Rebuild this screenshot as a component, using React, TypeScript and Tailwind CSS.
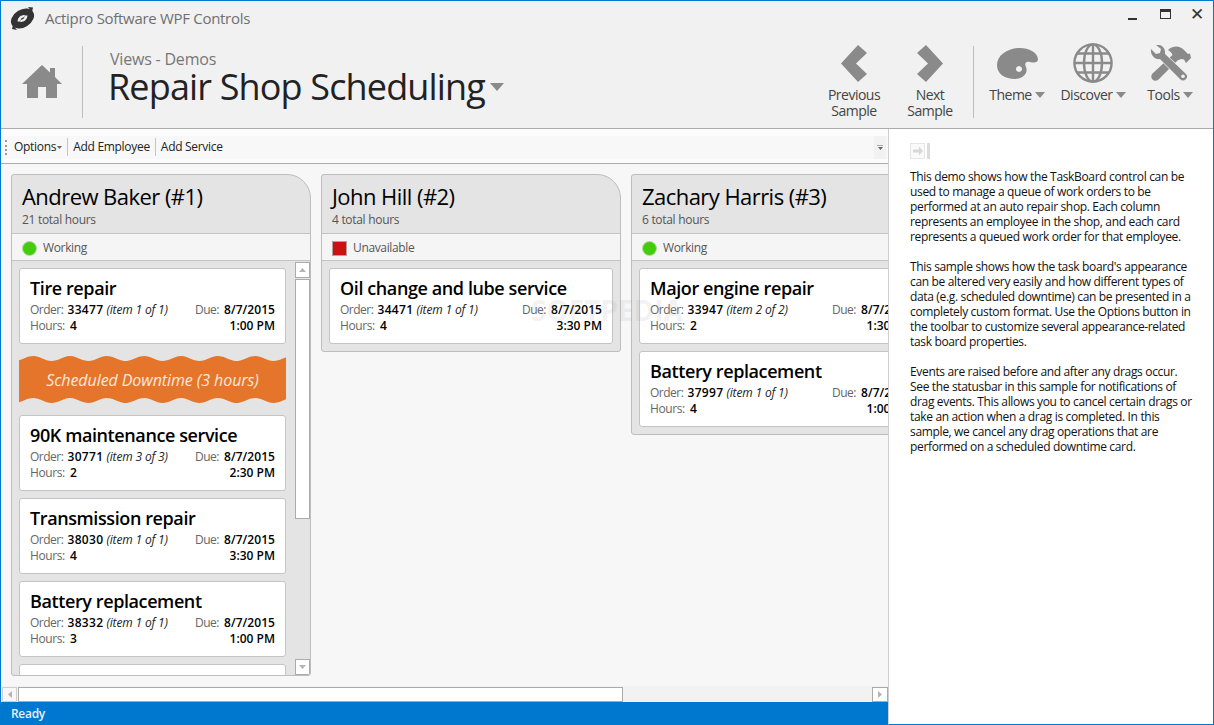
import type { ReactNode } from 'react';

interface Job {
  title: string;
  order: string;
  item: string;
  hours: string;
  time: string;
}

interface Employee {
  name: string;
  total: string;
  status: 'Working' | 'Unavailable';
}

const FONT = '"Open Sans", "Noto Sans", sans-serif';

const andrewJobs: Job[] = [
  { title: 'Tire repair', order: '33477', item: '(item 1 of 1)', hours: '4', time: '1:00 PM' },
];
const andrewJobsAfter: Job[] = [
  { title: '90K maintenance service', order: '30771', item: '(item 3 of 3)', hours: '2', time: '2:30 PM' },
  { title: 'Transmission repair', order: '38030', item: '(item 1 of 1)', hours: '4', time: '3:30 PM' },
  { title: 'Battery replacement', order: '38332', item: '(item 1 of 1)', hours: '3', time: '1:00 PM' },
];
const johnJobs: Job[] = [
  { title: 'Oil change and lube service', order: '34471', item: '(item 1 of 1)', hours: '4', time: '3:30 PM' },
];
const zacharyJobs: Job[] = [
  { title: 'Major engine repair', order: '33947', item: '(item 2 of 2)', hours: '2', time: '1:30 PM' },
  { title: 'Battery replacement', order: '37997', item: '(item 1 of 1)', hours: '4', time: '1:00 PM' },
];

const description = [
  'This demo shows how the TaskBoard control can be\nused to manage a queue of work orders to be\nperformed at an auto repair shop. Each column\nrepresents an employee in the shop, and each card\nrepresents a queued work order for that employee.',
  "This sample shows how the task board's appearance\ncan be altered very easily and how different types of\ndata (e.g. scheduled downtime) can be presented in a\ncompletely custom format. Use the Options button in\nthe toolbar to customize several appearance-related\ntask board properties.",
  'Events are raised before and after any drags occur.\nSee the statusbar in this sample for notifications of\ndrag events. This allows you to cancel certain drags or\ntake an action when a drag is completed. In this\nsample, we cancel any drag operations that are\nperformed on a scheduled downtime card.',
];

function wavePath(width: number, height: number) {
  const edge = (x: number) => 2.5 - 2.5 * Math.cos((2 * Math.PI * (x - 14)) / 37);
  const top: string[] = [];
  const bottom: string[] = [];
  for (let x = 0; x <= width; x += 3) {
    top.push(`${x} ${edge(x).toFixed(2)}`);
    bottom.unshift(`${x} ${(height - 5 + edge(x)).toFixed(2)}`);
  }
  return `M${top.join(' L')} L${bottom.join(' L')}z`;
}

function Caret({ small }: { small?: boolean }) {
  return (
    <svg width={small ? 5 : 10} height={small ? 3 : 6} viewBox="0 0 10 6" className="shrink-0">
      <path d="M0 0h10L5 6z" fill={small ? '#666' : '#8a8a8a'} />
    </svg>
  );
}

function Logo() {
  return (
    <svg width="25" height="23" viewBox="0 0 25 23">
      <ellipse cx="12.5" cy="11.5" rx="12.5" ry="8.8" fill="#333" transform="rotate(-32 12.5 11.5)" />
      <path d="M18 0 L23 0.5 L22 5 z" fill="#333" />
      <path d="M7 23 L2 22 L3 18 z" fill="#333" />
      <path d="M7.5 14.5 C8 10 11 8 15 8 L13.5 10.5 C11.5 10.5 10.5 12 10.5 14.5z" fill="#f1f1f1" />
      <path d="M17.5 8.5 C17 13 14 15 10 15 L11.5 12.5 C13.5 12.5 14.5 11 14.5 8.5z" fill="#f1f1f1" />
    </svg>
  );
}

function HomeIcon() {
  return (
    <svg width="40" height="34" viewBox="0 0 40 34">
      <path d="M20 0 L28 7.5 V3 H33 V12 L40 19 H35 V33 H24 V22 H16 V33 H5 V19 H0z" fill="#8a8a8a" />
    </svg>
  );
}

function ChevronIcon({ dir }: { dir: 'left' | 'right' }) {
  return (
    <svg width="26" height="37" viewBox="0 0 26 37">
      <path
        d={dir === 'left' ? 'M17 0 L26 8 L15 18.5 L26 29 L17 37 L0 18.5z' : 'M9 0 L0 8 L11 18.5 L0 29 L9 37 L26 18.5z'}
        fill="#8a8a8a"
      />
    </svg>
  );
}

function PaletteIcon() {
  return (
    <svg width="41" height="31" viewBox="0 0 41 31">
      <path
        fillRule="evenodd"
        d="M23 0 C32 0 40 4 41 11 C41 15 37 15 33 14 C29 13 27 15 29 19 C31 24 28 30 18 31 C8 31 0 26 0 17 C0 7 11 0 23 0z M22 18 a3 3 0 1 0 0.01 0z"
        fill="#8a8a8a"
      />
    </svg>
  );
}

function GlobeIcon() {
  return (
    <svg width="40" height="40" viewBox="0 0 40 40" fill="none" stroke="#8a8a8a" strokeWidth="2.4">
      <circle cx="20" cy="20" r="18.6" />
      <ellipse cx="20" cy="20" rx="9" ry="18.6" />
      <path d="M20 1.5V38.5M1.5 20H38.5M4.5 10.5H35.5M4.5 29.5H35.5" />
    </svg>
  );
}

function ToolsIcon() {
  return (
    <svg width="41" height="36" viewBox="0 0 41 36">
      <path
        fill="#8a8a8a"
        d="M18 5 C24 0 30 1 34 5 L38 9 L40 8.5 L41 13 L36 18 L34 14.5 L31 14 L27.5 15.5 L8 35 C6 36 4 36 2.5 34.5 C1 33 1 31 2 29 L22.5 10 C22 8 20 6 18 5z"
      />
      <path
        fill="#8a8a8a"
        stroke="#f1f1f1"
        strokeWidth="1.2"
        paintOrder="stroke"
        d="M1 4 L6 9 L10 8 L11 4 L6 0 C10 -1 15 2 15 7 L15 9 L36 29 C38 31 37 33 36 34 C34 36 32 36 30 34 L10 14 C5 15 0 10 1 4z"
      />
      <circle cx="33" cy="31.2" r="1.8" fill="#f1f1f1" />
    </svg>
  );
}

function CommandButton({ icon, label, w, caret }: { icon: ReactNode; label: string[]; w: string; caret?: boolean }) {
  return (
    <div className={`flex flex-col items-center -mt-[5px] ${w}`}>
      <div className="h-[44px] flex items-center justify-center">{icon}</div>
      <div className="mt-[2px] text-[14px] leading-[16px] text-[#444] text-center tracking-[-0.5px] flex flex-col items-center">
        {label.map((line) => (
          <span key={line} className="flex items-center gap-[3px] whitespace-nowrap">
            {line}
            {caret && <Caret />}
          </span>
        ))}
      </div>
    </div>
  );
}

function JobCard({ job, wide }: { job: Job; wide?: boolean }) {
  return (
    <div
      className={`shrink-0 h-[76px] bg-white border border-[#c4c4c4] rounded-[3px] pl-[10px] pr-[10px] pt-[7px] ${wide ? 'w-[284px]' : 'w-[267px]'}`}
    >
      <div className="text-[18px] leading-[24px] font-semibold text-black tracking-[-0.4px] whitespace-nowrap">{job.title}</div>
      <div className="mt-[2px] flex justify-between text-[12px] leading-[16px] whitespace-nowrap">
        <span>
          <span className="text-[#666] tracking-[-0.5px]">Order:</span>{' '}
          <span className="ml-[1px] font-semibold text-black tracking-[0.3px]">{job.order}</span>{' '}
          <span className="italic text-[#222] tracking-[-0.15px]">{job.item}</span>
        </span>
        <span>
          <span className="text-[#666] tracking-[-0.5px]">Due:</span>{' '}
          <span className="ml-[2px] font-semibold text-black tracking-[0.05px]">8/7/2015</span>
        </span>
      </div>
      <div className="flex justify-between text-[12px] leading-[16px] whitespace-nowrap">
        <span>
          <span className="text-[#666] tracking-[-0.4px]">Hours:</span> <span className="ml-[2px] font-semibold text-black">{job.hours}</span>
        </span>
        <span className="font-semibold text-black">{job.time}</span>
      </div>
    </div>
  );
}

function DowntimeBand() {
  return (
    <div className="relative shrink-0 w-[267px] h-[47px] my-[5px] flex items-center justify-center">
      <svg width="267" height="47" viewBox="0 0 267 47" className="absolute inset-0">
        <path fill="#e5752a" d={wavePath(267, 47)} />
      </svg>
      <span className="relative text-[16px] italic text-[#fbe9dc] tracking-[-0.08px]">Scheduled Downtime (3 hours)</span>
    </div>
  );
}

function ScrollButton({ up }: { up?: boolean }) {
  return (
    <div className="h-[16px] w-[15px] shrink-0 bg-white border border-[#ababab] flex items-center justify-center">
      <svg width="7" height="4" viewBox="0 0 7 4">
        <path d={up ? 'M0 4h7L3.5 0z' : 'M0 0h7L3.5 4z'} fill="#b4b4b4" />
      </svg>
    </div>
  );
}

function Column({ employee, children }: { employee: Employee; children: ReactNode }) {
  const working = employee.status === 'Working';
  return (
    <div className="w-[300px] shrink-0 self-start overflow-hidden rounded-[3px] rounded-tr-[24px] border border-[#bdbdbd] bg-[#e4e4e4]">
      <div className="h-[58px] pl-[10px] pt-[6px]">
        <div className="text-[22px] leading-[30px] text-black tracking-[-0.55px] whitespace-nowrap">{employee.name}</div>
        <div className="mt-[1px] text-[12px] leading-[16px] text-[#555] tracking-[-0.3px]">{employee.total}</div>
      </div>
      <div className="h-[28px] pt-[2px] flex items-center gap-[6px] pl-[10px] bg-[#f5f5f5] border-y border-[#c4c4c4]">
        {working ? (
          <span className="w-[15px] h-[15px] rounded-full bg-[#44cc0a] border border-[#b5d8a8]" />
        ) : (
          <span className="w-[15px] h-[15px] bg-[#cc1111] border border-[#b5a0a0]" />
        )}
        <span className="text-[12px] text-[#555] tracking-[-0.35px]">{employee.status}</span>
      </div>
      {children}
    </div>
  );
}

export default function App() {
  return (
    <div
      className="w-[1214px] h-[725px] flex flex-col overflow-hidden border-t border-x border-[#0078d0] bg-white"
      style={{ fontFamily: FONT }}
    >
      {/* Window header */}
      <div className="h-[127px] shrink-0 bg-[#f1f1f1] flex flex-col">
        <div className="h-[34px] flex items-center pl-[9px]">
          <Logo />
          <span className="ml-[10px] text-[15px] text-[#6f6f6f] tracking-[-0.3px]">Actipro Software WPF Controls</span>
          <div className="ml-auto flex items-center pr-[9px] -mt-[9px]">
            <span className="w-[9px] h-[2px] mt-[10px] bg-[#333]" />
            <span className="ml-[23px] w-[11px] h-[10px] border border-[#333] border-t-[3px]" />
            <span className="ml-[19px] text-[17px] leading-[12px] text-[#333]">✕</span>
          </div>
        </div>
        <div className="flex items-start h-[73px] mt-[11px]">
          <div className="w-[82px] h-[72px] border-r border-[#bdbdbd] flex items-center pl-[21px]">
            <HomeIcon />
          </div>
          <div className="pl-[25px] mt-[3px]">
            <div className="pl-[2px] text-[16px] leading-[20px] text-[#777] tracking-[-0.2px]">Views - Demos</div>
            <div className="flex items-center gap-[5px] -mt-[5px]">
              <span className="text-[36px] leading-[46px] text-[#222] tracking-[-0.85px] whitespace-nowrap">Repair Shop Scheduling</span>
              <svg width="14" height="8" viewBox="0 0 14 8">
                <path d="M0 0h14L7 8z" fill="#8a8a8a" />
              </svg>
            </div>
          </div>
          <div className="ml-auto flex items-start pr-[6px]">
            <CommandButton icon={<ChevronIcon dir="left" />} label={['Previous', 'Sample']} w="w-[76px]" />
            <CommandButton icon={<ChevronIcon dir="right" />} label={['Next', 'Sample']} w="w-[76px]" />
            <div className="w-[1px] h-[72px] ml-[5px] mr-[7px] bg-[#bdbdbd]" />
            <CommandButton icon={<PaletteIcon />} label={['Theme']} w="w-[72px]" caret />
            <CommandButton icon={<GlobeIcon />} label={['Discover']} w="w-[80px]" caret />
            <CommandButton icon={<ToolsIcon />} label={['Tools']} w="w-[74px]" caret />
          </div>
        </div>
      </div>

      <div className="flex-1 min-h-0 flex border-t border-[#ababab]">
        {/* Sample area */}
        <div className="w-[887px] shrink-0 flex flex-col bg-[#f7f7f7]">
          <div className="h-[35px] shrink-0 border-b border-[#ababab] bg-[#fcfcfc] flex items-center">
            <div className="flex-1 h-[23px] mt-[2px] flex items-center bg-[#f8f8f8] text-[12px] text-[#222] tracking-[-0.3px]">
              <span className="ml-[4px] w-[2px] h-[15px] border-l-2 border-dotted border-[#999]" />
              <span className="ml-[7px] flex items-center gap-[1px]">
                Options
                <Caret small />
              </span>
              <span className="mx-[5px] w-[1px] h-[18px] bg-[#c4c4c4]" />
              <span>Add Employee</span>
              <span className="mx-[5px] w-[1px] h-[18px] bg-[#c4c4c4]" />
              <span>Add Service</span>
              <span className="ml-auto mr-[2px] w-[12px] h-[23px] bg-[#f2f2f2] flex flex-col items-center justify-center gap-[1px]">
                <span className="w-[6px] h-[1px] bg-[#aaa]" />
                <Caret small />
              </span>
            </div>
          </div>

          {/* Task board */}
          <div className="flex-1 min-h-0 overflow-hidden flex gap-[10px] pl-[10px] pt-[10px] relative">
            <div className="w-[300px] shrink-0 h-[502px] overflow-hidden flex">
              <Column employee={{ name: 'Andrew Baker (#1)', total: '21 total hours', status: 'Working' }}>
                <div className="h-[414px] flex overflow-hidden">
                  <div className="w-[283px] pl-[7px] pt-[7px] flex flex-col gap-[7px] overflow-hidden">
                    {andrewJobs.map((job) => (
                      <JobCard key={job.order} job={job} />
                    ))}
                    <DowntimeBand />
                    {andrewJobsAfter.map((job) => (
                      <JobCard key={job.order} job={job} />
                    ))}
                    <div className="shrink-0 w-[267px] h-[76px] bg-white border border-[#c4c4c4] rounded-[3px]" />
                  </div>
                  <div className="w-[15px] flex flex-col pt-[1px]">
                    <ScrollButton up />
                    <div className="h-[240px] mt-[1px] border border-[#ababab] bg-white" />
                    <div className="flex-1" />
                    <ScrollButton />
                  </div>
                </div>
              </Column>
            </div>
            <Column employee={{ name: 'John Hill (#2)', total: '4 total hours', status: 'Unavailable' }}>
              <div className="pl-[7px] py-[7px]">
                {johnJobs.map((job) => (
                  <JobCard key={job.order} job={job} wide />
                ))}
              </div>
            </Column>
            <Column employee={{ name: 'Zachary Harris (#3)', total: '6 total hours', status: 'Working' }}>
              <div className="pl-[7px] py-[7px] flex flex-col gap-[7px]">
                {zacharyJobs.map((job) => (
                  <JobCard key={job.order} job={job} wide />
                ))}
              </div>
            </Column>
            {/* Watermark over the board */}
            <span className="absolute left-[530px] top-[125px] text-[28px] font-bold text-[#9a9a9a]/15 whitespace-nowrap">
              SOFTPEDIA
            </span>
          </div>

          {/* Horizontal scrollbar */}
          <div className="h-[16px] shrink-0 bg-[#f2f2f2] flex items-center pl-[1px] pr-[0px]">
            <div className="w-[15px] h-[15px] bg-[#f7f7f7] border border-[#cfcfcf] flex items-center justify-center">
              <svg width="4" height="7" viewBox="0 0 4 7">
                <path d="M4 0v7L0 3.5z" fill="#b4b4b4" />
              </svg>
            </div>
            <div className="ml-[1px] w-[605px] h-[15px] bg-white border border-[#ababab]" />
            <div className="ml-auto w-[16px] h-[15px] bg-white border border-[#ababab] flex items-center justify-center">
              <svg width="4" height="7" viewBox="0 0 4 7">
                <path d="M0 0v7L4 3.5z" fill="#b4b4b4" />
              </svg>
            </div>
          </div>
          <div className="h-[23px] shrink-0 bg-[#0078d0] flex items-center pl-[10px] text-[12px] font-semibold text-[#e8f2fb] tracking-[-0.3px]">Ready</div>
        </div>

        {/* Description panel */}
        <div className="flex-1 bg-white border-l border-[#cfcfcf] border-b border-b-[#0078d0] pl-[21px] pt-[14px]">
          <svg width="21" height="16" viewBox="0 0 21 16">
            <rect x="0.5" y="0.5" width="14" height="15" fill="#fafafa" stroke="#e6e6e6" />
            <path d="M3 6.5h6V3.5l4 4.5-4 4.5V9.5H3z" fill="#d8d8d8" />
            <rect x="17" y="0" width="3" height="16" fill="#dcdcdc" />
          </svg>
          <div className="mt-[10px] flex flex-col gap-[15px] text-[12px] leading-[15px] text-[#111] tracking-[-0.34px] whitespace-pre-line">
            {description.map((paragraph) => (
              <p key={paragraph.slice(0, 12)}>{paragraph}</p>
            ))}
          </div>
        </div>
      </div>
    </div>
  );
}
